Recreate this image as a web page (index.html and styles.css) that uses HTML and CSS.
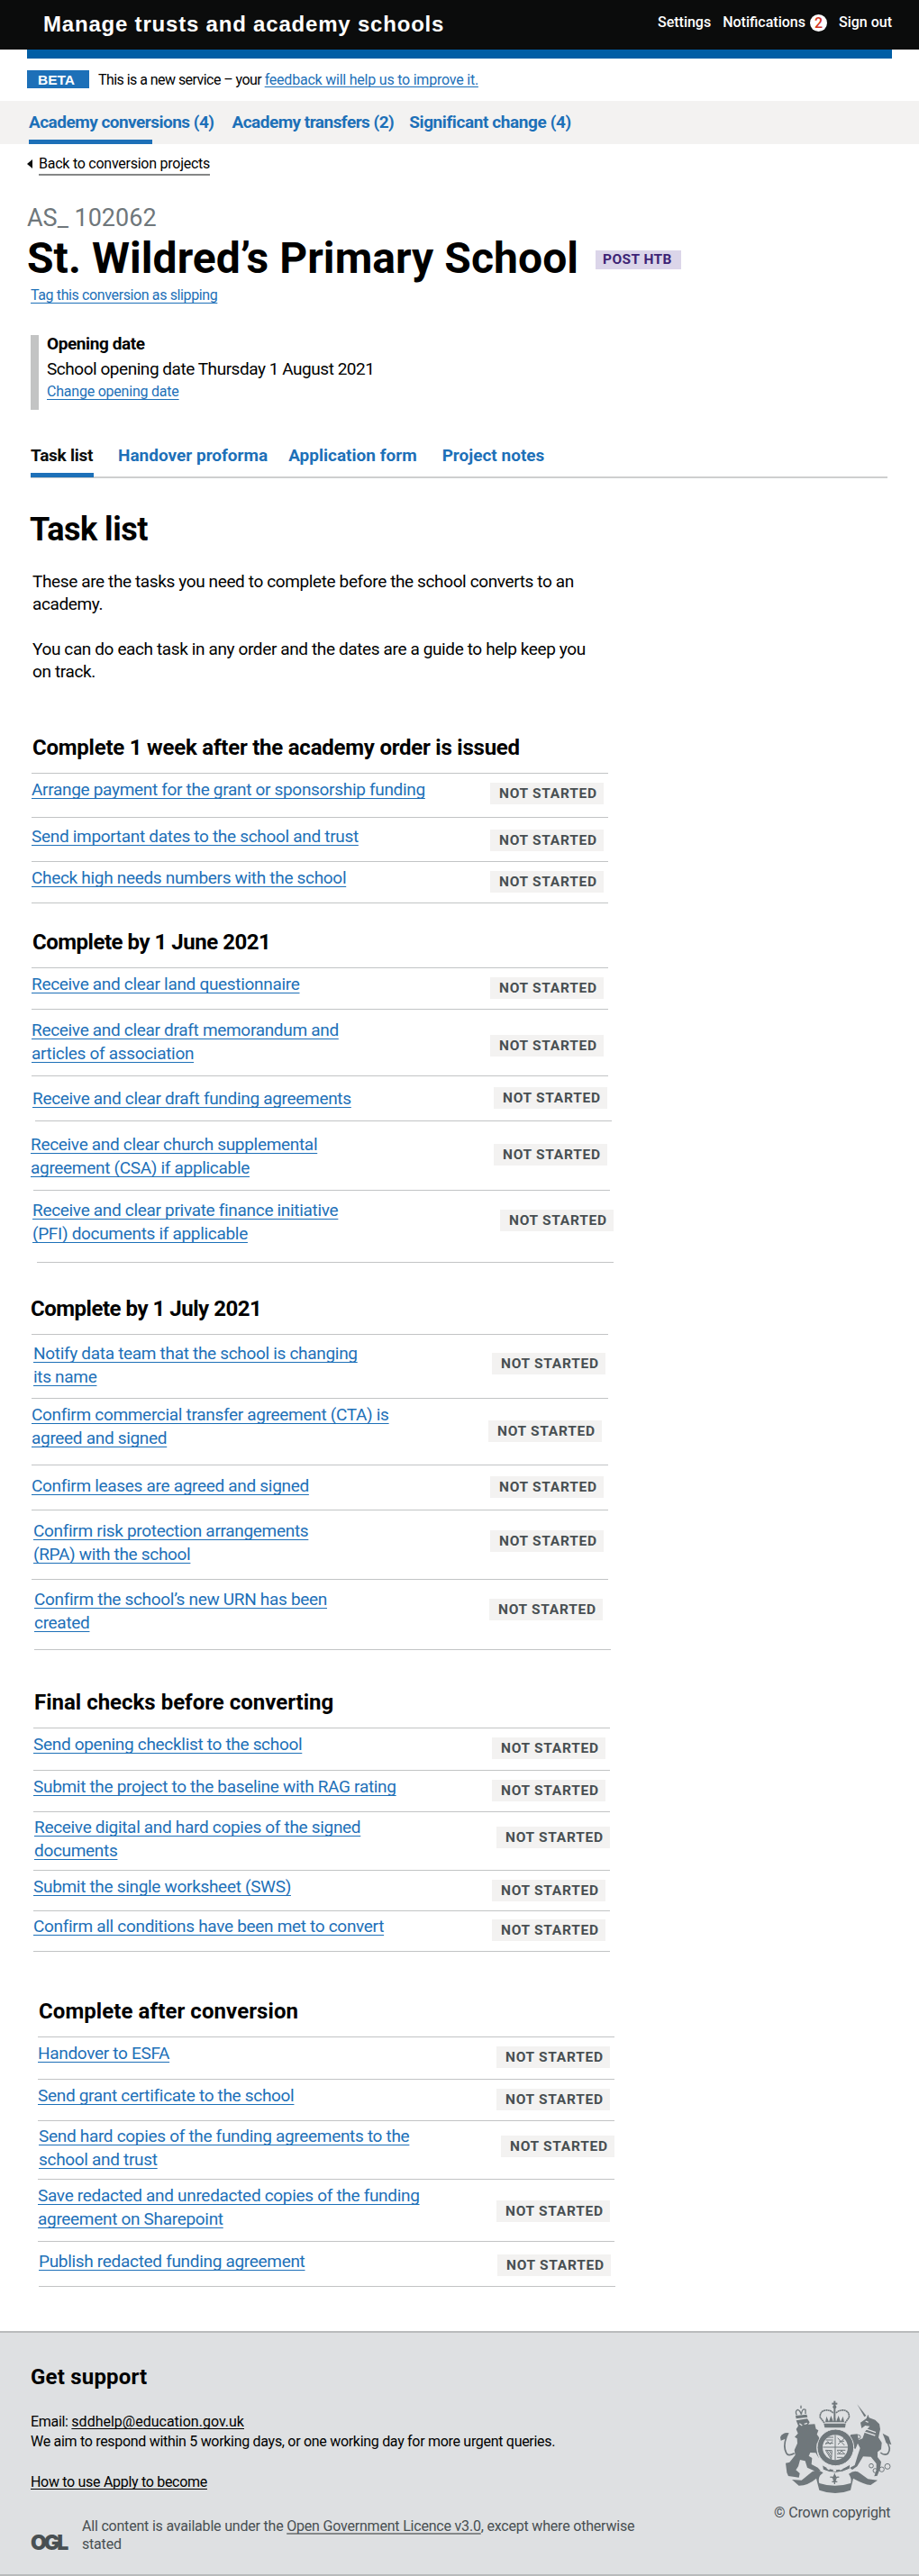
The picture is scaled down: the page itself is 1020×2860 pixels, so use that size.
FILE: index.html
```html
<!DOCTYPE html>
<html lang="en">
<head>
<meta charset="utf-8">
<title>St. Wildred’s Primary School – Manage trusts and academy schools</title>
<link rel="stylesheet" href="styles.css">
</head>
<body>
<header class="header">
  <div class="header-title">Manage trusts and academy schools</div>
  <nav class="header-nav">
    <a class="header-link">Settings</a>
    <a class="header-link header-link-count">Notifications <span class="count">2</span></a>
    <a class="header-link">Sign out</a>
  </nav>
</header>
<div class="header-bar"></div>
<div class="phase">
  <strong class="phase-tag">BETA</strong>
  <span class="phase-text">This is a new service – your <a class="link phase-link">feedback will help us to improve it.</a></span>
</div>
<nav class="primary">
  <a class="primary-link primary-current">Academy conversions (4)</a>
  <a class="primary-link">Academy transfers (2)</a>
  <a class="primary-link">Significant change (4)</a>
</nav>
<main class="main">
  <div class="back"><span class="back-arrow"></span><a class="back-link">Back to conversion projects</a></div>
  <div class="reference">AS_ 102062</div>
  <div class="title-row"><h1 class="title">St. Wildred’s Primary School</h1><strong class="tag tag-purple">POST HTB</strong></div>
  <div class="slip"><a class="link">Tag this conversion as slipping</a></div>
  <div class="inset">
    <h2 class="inset-title">Opening date</h2>
    <p class="inset-text">School opening date Thursday 1 August 2021</p>
    <p class="inset-change"><a class="link">Change opening date</a></p>
  </div>
  <nav class="tabs">
    <a class="tab tab-current">Task list</a>
    <a class="tab">Handover proforma</a>
    <a class="tab">Application form</a>
    <a class="tab">Project notes</a>
  </nav>
  <h2 class="heading">Task list</h2>
  <p class="intro">These are the tasks you need to complete before the school converts to an<br>academy.</p>
  <p class="intro">You can do each task in any order and the dates are a guide to help keep you<br>on track.</p>

  <section class="group group-order">
    <h3 class="group-title">Complete 1 week after the academy order is issued</h3>
    <ul class="tasks">
      <li class="task"><div class="task-name"><a class="link">Arrange payment for the grant or sponsorship funding</a></div><strong class="tag">NOT STARTED</strong></li>
      <li class="task"><div class="task-name"><a class="link">Send important dates to the school and trust</a></div><strong class="tag">NOT STARTED</strong></li>
      <li class="task"><div class="task-name"><a class="link">Check high needs numbers with the school</a></div><strong class="tag">NOT STARTED</strong></li>
    </ul>
  </section>

  <section class="group group-june">
    <h3 class="group-title">Complete by 1 June 2021</h3>
    <ul class="tasks">
      <li class="task"><div class="task-name"><a class="link">Receive and clear land questionnaire</a></div><strong class="tag">NOT STARTED</strong></li>
      <li class="task"><div class="task-name"><a class="link">Receive and clear draft memorandum and<br>articles of association</a></div><strong class="tag">NOT STARTED</strong></li>
      <li class="task"><div class="task-name"><a class="link">Receive and clear draft funding agreements</a></div><strong class="tag">NOT STARTED</strong></li>
      <li class="task"><div class="task-name"><a class="link">Receive and clear church supplemental<br>agreement (CSA) if applicable</a></div><strong class="tag">NOT STARTED</strong></li>
      <li class="task"><div class="task-name"><a class="link">Receive and clear private finance initiative<br>(PFI) documents if applicable</a></div><strong class="tag">NOT STARTED</strong></li>
    </ul>
  </section>

  <section class="group group-july">
    <h3 class="group-title">Complete by 1 July 2021</h3>
    <ul class="tasks">
      <li class="task"><div class="task-name"><a class="link">Notify data team that the school is changing<br>its name</a></div><strong class="tag">NOT STARTED</strong></li>
      <li class="task"><div class="task-name"><a class="link">Confirm commercial transfer agreement (CTA) is<br>agreed and signed</a></div><strong class="tag">NOT STARTED</strong></li>
      <li class="task"><div class="task-name"><a class="link">Confirm leases are agreed and signed</a></div><strong class="tag">NOT STARTED</strong></li>
      <li class="task"><div class="task-name"><a class="link">Confirm risk protection arrangements<br>(RPA) with the school</a></div><strong class="tag">NOT STARTED</strong></li>
      <li class="task"><div class="task-name"><a class="link">Confirm the school’s new URN has been<br>created</a></div><strong class="tag">NOT STARTED</strong></li>
    </ul>
  </section>

  <section class="group group-final">
    <h3 class="group-title">Final checks before converting</h3>
    <ul class="tasks">
      <li class="task"><div class="task-name"><a class="link">Send opening checklist to the school</a></div><strong class="tag">NOT STARTED</strong></li>
      <li class="task"><div class="task-name"><a class="link">Submit the project to the baseline with RAG rating</a></div><strong class="tag">NOT STARTED</strong></li>
      <li class="task"><div class="task-name"><a class="link">Receive digital and hard copies of the signed<br>documents</a></div><strong class="tag">NOT STARTED</strong></li>
      <li class="task"><div class="task-name"><a class="link">Submit the single worksheet (SWS)</a></div><strong class="tag">NOT STARTED</strong></li>
      <li class="task"><div class="task-name"><a class="link">Confirm all conditions have been met to convert</a></div><strong class="tag">NOT STARTED</strong></li>
    </ul>
  </section>

  <section class="group group-after">
    <h3 class="group-title">Complete after conversion</h3>
    <ul class="tasks">
      <li class="task"><div class="task-name"><a class="link">Handover to ESFA</a></div><strong class="tag">NOT STARTED</strong></li>
      <li class="task"><div class="task-name"><a class="link">Send grant certificate to the school</a></div><strong class="tag">NOT STARTED</strong></li>
      <li class="task"><div class="task-name"><a class="link">Send hard copies of the funding agreements to the<br>school and trust</a></div><strong class="tag">NOT STARTED</strong></li>
      <li class="task"><div class="task-name"><a class="link">Save redacted and unredacted copies of the funding<br>agreement on Sharepoint</a></div><strong class="tag">NOT STARTED</strong></li>
      <li class="task"><div class="task-name"><a class="link">Publish redacted funding agreement</a></div><strong class="tag">NOT STARTED</strong></li>
    </ul>
  </section>
</main>
<footer class="footer">
  <div class="support">
    <h2 class="support-title">Get support</h2>
    <p class="support-text">Email: <a class="footer-link support-email">sddhelp@education.gov.uk</a><br>We aim to respond within 5 working days, or one working day for more urgent queries.</p>
    <p class="support-text support-guide"><a class="footer-link">How to use Apply to become</a></p>
    <div class="licence">
      <span class="ogl">OGL</span>
      <p class="licence-text">All content is available under the <a class="licence-link">Open Government Licence v3.0</a>, except where otherwise<br>stated</p>
    </div>
  </div>
  <div class="copyright">
    <svg class="crest" viewBox="0 0 405 336" width="135" height="112" aria-hidden="true">
      <g fill="#6f777b">
        <!-- lion -->
        <path d="M71 82 L108 76 L116 88 L111 95 L133 94 L137 110 L145 115 L140 128 L147 138 L150 150 L142 158 L158 186 L162 202 L146 206 L136 190 L118 189 L113 200 L124 207 L122 228 L143 239 L152 249 L139 255 L128 248 L108 239 L101 217 L84 213 L78 235 L70 247 L83 258 L80 272 L66 270 L45 267 L40 256 L36 224 L49 221 L68 197 L65 181 L75 158 L74 142 L66 137 L77 125 L71 111 L78 100 Z"/>
        <path d="M18 137 Q28 120 47 124 L39 142 L20 149 Z"/>
        <path d="M69 66 L106 62 L109 71 L71 76 Z"/>
        <!-- unicorn -->
        <path d="M274 28 L304 66 L298 70 Z"/>
        <path d="M285 89 L305 75 L310 62 L314 73 L334 80 L348 94 L351 111 L345 139 L356 156 L354 178 L342 187 L342 204 L354 220 L350 243 L341 266 L331 268 L338 247 L338 226 L320 203 L294 202 L274 235 L258 246 L249 240 L266 231 L275 201 L284 174 L276 158 L269 176 L258 174 L260 154 L247 140 L253 129 L275 127 L279 147 L292 142 L300 119 L316 101 L301 99 L289 108 Z"/>
        <path d="M359 125 L379 136 L388 163 L371 157 Z"/>
        <!-- crown -->
        <path d="M163 92 H236 L234 106 H166 Z"/>
        <path d="M168 88 L172 68 L180 86 L187 66 L195 86 L199 62 L204 86 L212 66 L219 86 L227 68 L231 88 Z"/>
        <circle cx="199" cy="37" r="6"/><rect x="196" y="17" width="6" height="62"/><rect x="190" y="23" width="18" height="6"/>
        <!-- scroll -->
        <path d="M57 279 L89 281 Q108 266 125 252 Q145 244 161 256 L151 265 Q143 277 148 291 Q200 308 253 291 Q257 275 246 260 Q268 243 284 258 L310 277 L342 281 L319 297 Q297 295 261 275 L252 314 Q202 334 148 314 L138 275 Q112 298 80 299 Z"/>
      </g>
      <g fill="none" stroke="#6f777b" stroke-width="5">
        <path d="M165 90 L151 72 Q149 52 168 48 Q186 46 195 58 M234 90 L247 72 Q249 52 231 48 Q213 46 203 58" stroke-dasharray="6 1"/>
        <path d="M38 139 Q27 169 38 190 Q44 203 65 191"/>
        <path d="M370 148 Q390 176 376 193 Q363 199 352 189"/>
        <path d="M73 64 Q66 51 76 46 Q84 48 88 62 Q91 40 102 46 L102 60 M87 42 V32" stroke-width="4"/>
        <g stroke-width="3"><circle cx="278" cy="137" r="7"/><circle cx="290" cy="159" r="7"/><circle cx="344" cy="171" r="7"/><circle cx="321" cy="233" r="7"/><circle cx="334" cy="249" r="7"/><circle cx="356" cy="245" r="8"/><circle cx="375" cy="235" r="9"/></g>
        <path d="M199 259 V294 M190 286 H208 M199 263 Q190 273 199 286 Q208 273 199 263 M184 271 Q196 268 196 283 M214 271 Q202 268 202 283" stroke-width="4"/>
      </g>
      <g fill="none" stroke="#dee0e2" stroke-width="4">
        <path d="M82 92 L91 99 M98 94 L108 91 M294 119 L334 132 M300 109 L336 122 M302 84 L311 88"/>
        <path d="M142 158 Q136 190 158 225 M254 150 Q272 184 249 225"/>
      </g>
      <circle cx="202" cy="172" r="61" fill="#6f777b" stroke="#dee0e2" stroke-width="3"/>
      <circle cx="201" cy="172" r="42" fill="#dee0e2"/>
      <g fill="none" stroke="#6f777b" stroke-width="3">
        <path d="M201 130 V215 M160 171 H243" />
        <path d="M170 147 H194 M169 158 H194 M174 138 H195 M169 162 L176 152 L184 161 L192 151 M207 181 H235 M207 193 H234 M207 205 H227 M209 184 L215 191 L222 183 L230 191"/>
        <path d="M209 140 L232 165 M210 162 L232 141 M214 151 H231 M169 181 L188 212 L190 182 Z M175 183 L188 204 M182 183 L188 193"/>
      </g>
      <path d="M158 230 Q203 262 251 228 L250 243 Q202 267 160 246 Z" fill="#6f777b" stroke="#dee0e2" stroke-width="3"/>
      <path d="M174 239 L182 245 M194 248 L204 249 M216 246 L225 241" stroke="#dee0e2" stroke-width="6"/>
    </svg>
    <div class="copyright-text">© Crown copyright</div>
  </div>
</footer>
</body>
</html>
```
FILE: styles.css
```css
* { box-sizing: border-box; }
body {
  margin: 0;
  background: #fff;
  color: #000;
  font-family: Roboto, "Liberation Sans", sans-serif;
  font-size: 16px;
}
h1, h2, h3, p, ul { margin: 0; padding: 0; }
ul { list-style: none; }

.link {
  color: #1d70b8;
  text-decoration: underline;
  text-decoration-thickness: 1px;
  text-underline-offset: 3px;
  text-decoration-skip-ink: none;
}

/* Header */
.header {
  display: flex;
  justify-content: space-between;
  height: 55px;
  padding: 0 30px 0 48px;
  background: #0b0c0c;
  color: #fff;
}
.header-title {
  padding-top: 12px;
  font: bold 24px/30px "Liberation Sans", Arial, sans-serif;
  letter-spacing: 0.8px;
}
.header-nav {
  display: flex;
  gap: 13px;
  padding-top: 14px;
  font-weight: 500;
  line-height: 22px;
}
.header-link { display: flex; }
.header-link-count { gap: 5px; }
.count {
  width: 19px;
  height: 19px;
  margin-top: 2px;
  border-radius: 50%;
  background: #fff;
  color: #d4351c;
  line-height: 19px;
  text-align: center;
}
.header-bar { height: 10px; margin: 0 30px; background: #005ea5; }

/* Phase banner */
.phase { display: flex; gap: 10px; height: 47px; padding: 13px 30px 0; }
.phase-tag {
  width: 69px;
  height: 20px;
  padding-left: 12px;
  background: #1d70b8;
  color: #fff;
  font: bold 15.5px/21px "Liberation Sans", Arial, sans-serif;
}
.phase-text { line-height: 22px; letter-spacing: -0.55px; }
.phase-link { text-underline-offset: 2px; letter-spacing: -0.22px; }

/* Primary navigation */
.primary {
  display: flex;
  gap: 20px;
  height: 48px;
  padding-left: 32px;
  background: #f3f2f1;
}
.primary-link {
  position: relative;
  padding-top: 12px;
  color: #1d70b8;
  font-size: 19px;
  font-weight: 700;
  line-height: 24px;
  letter-spacing: -0.52px;
}
.primary-link:last-child { margin-left: -3px; letter-spacing: -0.4px; }
.primary-current::after {
  content: "";
  position: absolute;
  left: 0;
  bottom: 0;
  width: 137px;
  height: 5px;
  background: #1d70b8;
}

.main { padding: 0 35px 49px 30px; }
.back { display: flex; align-items: flex-start; gap: 7px; height: 66px; padding-top: 11px; }
.back-arrow {
  margin-top: 6px;
  border: solid transparent;
  border-width: 5px 6px 5px 0;
  border-right-color: #0b0c0c;
}
.back-link {
  height: 24px;
  border-bottom: 2px solid #858686;
  line-height: 22px;
  letter-spacing: -0.25px;
}

/* Page title */
.reference { height: 34px; color: #6f777b; font-size: 27px; line-height: 32px; }
.title-row { display: flex; height: 57px; }
.title { font-size: 48px; line-height: 54px; letter-spacing: 0.07px; }
.slip { padding: 0 0 0 4px; height: 55px; line-height: 22px; letter-spacing: -0.38px; }
.tag {
  flex: none;
  width: 126px;
  height: 24px;
  padding-left: 10px;
  background: #f3f2f1;
  color: #484f52;
  font-size: 15.5px;
  font-weight: 700;
  line-height: 24px;
  letter-spacing: 0.72px;
}
.tag-purple {
  width: 95px;
  height: 21px;
  margin: 18px 0 0 19px;
  padding-left: 8px;
  background: #dbd5e9;
  color: #3d2375;
  line-height: 21px;
  letter-spacing: 0.4px;
}

.inset {
  height: 83px;
  margin-left: 4px;
  padding-left: 9px;
  border-left: 9px solid #c3c4c4;
}
.inset-title { font-size: 19px; line-height: 20px; letter-spacing: -0.4px; }
.inset-text { padding-top: 5px; font-size: 19px; line-height: 26px; letter-spacing: -0.46px; }
.inset-change { padding-top: 1px; line-height: 22px; letter-spacing: -0.22px; }

/* Tabs */
.tabs {
  display: flex;
  height: 76px;
  margin: 0 0 0 4px;
  border-bottom: 2px solid #cecfcf;
  color: #1d70b8;
  font-size: 19px;
  font-weight: 700;
  line-height: 24px;
}
.tab { padding-top: 39px; margin-right: 23px; }
.tab-current {
  height: 75px;
  width: 70px;
  margin-right: 27px;
  border-bottom: 5px solid #1d70b8;
  color: #0b0c0c;
  letter-spacing: -0.25px;
}
.tab:last-child { margin-left: 5px; }

.heading { margin: 36px 0 24px 3px; font-size: 36px; line-height: 42px; letter-spacing: -0.5px; }
.intro { margin: 0 0 25px 6px; font-size: 19px; line-height: 25px; letter-spacing: -0.38px; }

/* Task groups: each row sets where its rule, name and tag begin */
.group { --x: 4.5px; --lx: 5px; --tx: 514px; --end: 4.5px; }
.group-order { margin-top: 57px; }
.group-june { margin-top: 28px; --end: 10.5px; }
.group-july { margin-top: 36px; --end: 7.5px; }
.group-final { margin-top: 43px; --x: 6.5px; --lx: 7px; --tx: 516px; --end: 6.5px; }
.group-after { margin-top: 51px; --x: 11.5px; --lx: 12px; --tx: 521px; --end: 12.5px; }
.group-title { margin: 0 0 13px 6px; font-size: 24px; line-height: 30px; letter-spacing: -0.23px; }
.group-june .group-title { letter-spacing: -0.48px; }
.group-july .group-title { margin-left: 4px; letter-spacing: -0.48px; }
.group-final .group-title { margin-left: 8px; letter-spacing: 0; }
.group-after .group-title { margin-left: 13px; letter-spacing: 0.08px; }

.tasks::after {
  content: "";
  display: block;
  width: 640px;
  height: 1px;
  margin-left: var(--end);
  background: #c2c4c5;
}
.task {
  display: flex;
  align-items: flex-start;
  width: 640px;
  height: var(--h, 46px);
  margin-left: var(--x);
  border-top: 1px solid #c2c4c5;
}
.task-name {
  flex: none;
  width: calc(var(--tx) - var(--lx));
  margin-left: calc(var(--lx) - var(--x));
  padding-top: var(--name, 5px);
  font-size: 19px;
  line-height: 26px;
  letter-spacing: -0.31px;
}
.task .tag { margin-top: var(--tag, 10px); }

.group-order .task:nth-child(1) { --h: 49px; }
.group-order .task:nth-child(2) { --h: 49px; --name: 8px; --tag: 13px; }

.group-june .task:nth-child(2) { --h: 74px; --name: 10px; --tag: 28px; }
.group-june .task:nth-child(3) { --h: 50px; --name: 12px; --tag: 12px; --lx: 6px; --tx: 518px; }
.group-june .task:nth-child(4) { --h: 77px; --name: 13px; --tag: 25px; --x: 8.5px; --lx: 4px; --tx: 518px; }
.group-june .task:nth-child(5) { --h: 80px; --name: 9px; --tag: 21px; --x: 6.5px; --lx: 6px; --tx: 525px; }

.group-july .task:nth-child(1) { --h: 71px; --name: 8px; --tag: 20px; --lx: 7px; --tx: 516px; }
.group-july .task:nth-child(2) { --h: 74px; --tag: 24px; --tx: 512px; }
.group-july .task:nth-child(3) { --h: 50px; --name: 10px; --tag: 12px; }
.group-july .task:nth-child(4) { --h: 77px; --name: 10px; --tag: 22px; --lx: 7px; }
.group-july .task:nth-child(5) { --h: 78px; --name: 9px; --tag: 21px; --lx: 8px; --tx: 513px; }

.group-final .task:nth-child(1) { --h: 47px; }
.group-final .task:nth-child(3) { --h: 65px; --name: 4px; --tag: 16px; --lx: 8px; --tx: 521px; }
.group-final .task:nth-child(4) { --h: 45px; }
.group-final .task:nth-child(5) { --h: 45px; --name: 4px; --tag: 9px; }

.group-after .task:nth-child(1) { --h: 47px; }
.group-after .task:nth-child(3) { --h: 65px; --name: 4px; --tag: 16px; --lx: 13px; --tx: 526px; }
.group-after .task:nth-child(4) { --h: 69px; --tag: 23px; }
.group-after .task:nth-child(5) { --h: 50px; --name: 9px; --tag: 14px; --lx: 13px; --tx: 522px; }

/* Footer */
.footer {
  display: flex;
  justify-content: space-between;
  height: 272px;
  padding: 0 25px 0 34px;
  border: solid #b9bbbc;
  border-width: 2px 0;
  background: #dee0e2;
}
.support-title { padding-top: 34px; font-size: 24px; line-height: 30px; letter-spacing: 0.2px; }
.support-text { padding-top: 24px; line-height: 22px; letter-spacing: -0.3px; }
.support-email { letter-spacing: 0; }
.support-guide { padding-top: 23px; }
.footer-link, .licence-link {
  text-decoration: underline;
  text-decoration-thickness: 1px;
  text-underline-offset: 2px;
  text-decoration-skip-ink: none;
}
.licence { display: flex; gap: 14px; padding-top: 28px; color: #484f52; }
.licence-text { line-height: 20px; letter-spacing: -0.2px; }
.licence-link { text-decoration-color: #858889; text-decoration-thickness: 2px; }
.ogl {
  width: 43px;
  padding-top: 16px;
  font: 900 23px/24px Inter, sans-serif;
  letter-spacing: -3px;
}
.copyright { display: flex; flex-direction: column; padding-top: 70px; }
.crest { display: block; }
.copyright-text { padding-top: 7px; margin-left: -1px; color: #484f52; line-height: 22px; letter-spacing: -0.18px; }
```
